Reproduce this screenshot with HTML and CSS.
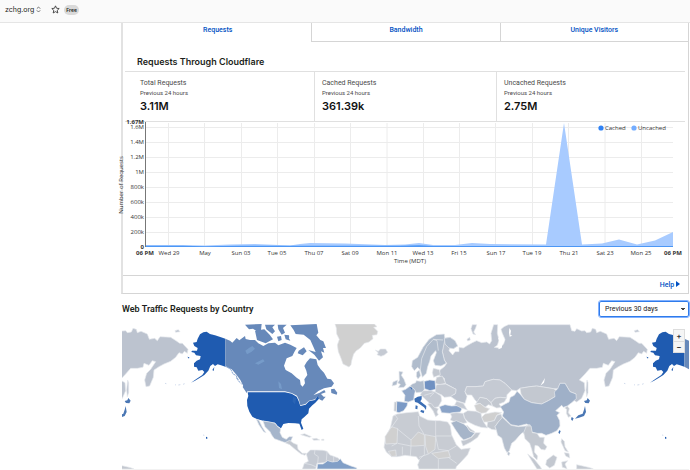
FILE: index.html
```html
<!DOCTYPE html>
<html lang="en">
<head>
<meta charset="utf-8">
<title>zchg.org analytics</title>
<link rel="stylesheet" href="styles.css">
</head>
<body>
<header class="topbar">
  <button class="site" type="button">zchg.org
    <svg class="sort" viewBox="0 0 6 8" aria-hidden="true"><path d="M1 3L3 1l2 2M1 5l2 2 2-2"/></svg>
  </button>
  <button class="star" type="button" aria-label="Star site">
    <svg viewBox="0 0 16 16" aria-hidden="true"><path d="M8 1.500l1.900 4.300 4.700.5-3.500 3.200 1 4.700L8 11.800l-4.100 2.400 1-4.700L1.400 6.300l4.700-.5z"/></svg>
  </button>
  <span class="plan">Free</span>
</header>
<main class="content">
  <section class="panel">
    <nav class="tabs">
      <a class="tab active" href="#requests">Requests</a>
      <a class="tab" href="#bandwidth">Bandwidth</a>
      <a class="tab" href="#visitors">Unique Visitors</a>
    </nav>
    <h2 class="panel-title">Requests Through Cloudflare</h2>
    <div class="stats">
      <div class="stat"><div class="name">Total Requests</div><div class="period">Previous 24 hours</div><div class="value">3.11M</div></div>
      <div class="stat"><div class="name">Cached Requests</div><div class="period">Previous 24 hours</div><div class="value">361.39k</div></div>
      <div class="stat"><div class="name">Uncached Requests</div><div class="period">Previous 24 hours</div><div class="value">2.75M</div></div>
    </div>
    <svg class="chart" viewBox="123 122 565 153" role="img" aria-label="Requests over time">
      <g class="grid">
        <path d="M146 127.500H673M146 142.500H673M146 157.500H673M146 172.500H673M146 187.500H673M146 202.500H673M146 217.500H673M146 232.500H673"/>
        <path d="M168.500 123V247M204.500 123V247M241.500 123V247M277.500 123V247M314.500 123V247M350.500 123V247M387 123V247M423.500 123V247M459.500 123V247M495.500 123V247M532.500 123V247M568.500 123V247M605 123V247M641.500 123V247"/>
      </g>
      <path class="uncached" d="M146 245L182 245 205 245.500 230 244.500 255 244 290 245.500 300 244 310 243 345 243.500 385 245 405 244.500 419 243 433 245 455 245 472 243 490 244 546 244.500 564 123 582 244.500 602 243.500 619 239.500 637 244.500 655 240.500 673 232V247H146Z"/>
      <path class="cached" d="M146 245.800H182L205 246.300 240 245.800H400L419 245.300 434 245.900H673V247H146Z"/>
      <path class="axis" d="M145.500 122V247"/>
      <g class="ylabels">
        <text class="strong" x="144" y="124">1.67M</text>
        <text x="144" y="129">1.6M</text><text x="144" y="144">1.4M</text><text x="144" y="159">1.2M</text><text x="144" y="174">1M</text>
        <text x="144" y="189">800k</text><text x="144" y="204">600k</text><text x="144" y="219">400k</text><text x="144" y="234">200k</text><text class="strong" x="144" y="249">0</text>
      </g>
      <g class="xlabels">
        <text class="strong" x="145" y="255">06 PM</text><text x="169" y="255">Wed 29</text><text x="205" y="255">May</text><text x="241" y="255">Sun 03</text><text x="277" y="255">Tue 05</text><text x="314" y="255">Thu 07</text><text x="350" y="255">Sat 09</text><text x="387" y="255">Mon 11</text><text x="423" y="255">Wed 13</text><text x="459" y="255">Fri 15</text><text x="496" y="255">Sun 17</text><text x="532" y="255">Tue 19</text><text x="569" y="255">Thu 21</text><text x="605" y="255">Sat 23</text><text x="641" y="255">Mon 25</text><text class="strong" x="673" y="255">06 PM</text>
        <text x="410" y="263">Time (MDT)</text>
        <text transform="translate(123 185) rotate(-90)">Number of Requests</text>
      </g>
      <g class="legend">
        <circle class="dot-cached" cx="601" cy="128" r="2.600"/><text x="605" y="130">Cached</text>
        <circle class="dot-uncached" cx="634" cy="128" r="2.600"/><text x="638" y="130">Uncached</text>
      </g>
    </svg>
    <footer class="panel-foot"><a class="help" href="#help">Help <svg viewBox="0 0 4 6" aria-hidden="true"><path d="M0 0l4 3-4 3z"/></svg></a></footer>
  </section>
  <div class="map-head">
    <h2>Web Traffic Requests by Country</h2>
    <select class="range" aria-label="Time range"><option>Previous 30 days</option><option>Previous 7 days</option></select>
  </div>
  <div class="map">
    <svg class="world" viewBox="21 12 1701 435" role="img" aria-label="World map of requests">
      <defs>
        <g id="east">
          <path class="russia" d="M178 55L195 52 210 62 218 78 205 86 195 82 192 92 203 105 210 95 222 95 222 82 235 84 248 76 262 68 275 62 290 68 305 66 314 72 320 62 318 40 326 14 338 14 337 40 342 60 337 76 328 82 342 84 356 72 360 58 352 40 348 28 357 20 370 14H555L560 32 570 34 575 26 590 33 600 32 605 38 617 36 622 25 632 28 635 38 646 34 665 42 671 58 687 55 695 62 703 50 735 52 751 62 762 70 770 70 787 88 785 100 776 94 770 102 760 98 750 112 735 124 715 132 700 140 685 150 683 172 672 198 661 200 657 180 663 160 675 148 690 125 680 122 670 136 655 130 652 142 635 145 615 145 600 162 583 180 598 188 600 212 590 235 575 246 565 240 573 222 555 215 540 190 525 190 520 206 505 206 480 202 455 198 435 200 405 205 395 212 380 210 360 190 345 180 325 178 300 185 295 198 270 200 245 200 240 215 246 230 240 250 215 242 195 228 210 222 213 208 195 198 180 190 178 175 160 165 165 150 178 140 185 130 178 120 172 95 175 75Z"/>
          <path class="russia" d="M262 14L275 14 272 24 266 36 272 44 264 42 258 26ZM246 58l8-6 2 8-8 3ZM748 32l10-3 5 6-13 2ZM606 180l3 8v30l-4 12-2-20Z"/>
          <path class="gap" d="M340 54L350 48 359 62 353 70 350 84 340 88 344 72ZM373 24l5 8-2 12 6 3-8 3-2-12ZM480 174l-3 14-11 9 7-12Z"/>
          <path class="kazakh" d="M240 215L245 200 270 200 295 198 300 185 325 178 345 180 360 190 380 210 366 224 365 234 345 232 330 235 318 248 305 236 285 232 278 248 270 240 260 225 246 225Z"/>
          <path class="gray" d="M405 205L435 200 455 198 480 202 505 206 520 214 510 230 490 242 470 252 440 248 418 238 408 222Z"/>
          <path class="gray" d="M318 248L330 235 345 232 365 234 358 246 342 252 350 262 335 264 322 258ZM272 252L285 232 305 236 318 248 322 258 310 254 300 262 285 250Z"/>
          <path class="none" d="M268 256L285 250 300 262 314 266 303 278 288 280 274 272Z"/>
          <path class="china" d="M346 260L360 252 372 246 376 232 388 226 396 214 405 222 418 238 440 248 470 252 490 242 510 230 508 216 518 206 525 190 540 190 555 215 573 222 574 236 560 248 547 258 535 262 530 256 512 272 524 278 516 286 524 302 525 318 516 332 500 340 483 346 470 340 455 340 440 336 437 318 425 312 400 318 378 314 364 300 352 288 356 276Z"/>
          <path class="gray" d="M547 258l6 8-3 12 8 10-8 4-6-12 1-12-6-4Z"/>
          <path class="none" d="M300 282L330 276 350 278 335 286 328 302 312 306 296 306 290 292Z"/>
          <path class="gray" d="M308 306L328 302 336 286 348 282 352 294 340 306 330 320 334 330 320 328 306 320Z"/>
          <path class="india" d="M334 330L330 320 340 306 352 292 365 304 378 316 400 320 422 318 435 314 432 332 424 342 412 338 404 346 390 362 380 370 373 392 366 398 358 384 350 354 338 346ZM370 394l5 6-3 7-5-4Z"/>
          <path class="gray" d="M424 318L438 318 442 338 456 340 464 352 478 352 476 370 486 380 480 390 468 388 460 378 450 376 448 396 458 408 456 420 446 410 440 388 434 370 420 356 416 338Z"/>
          <path class="east-asia" d="M428 402L448 418 466 440 470 447H456L440 422ZM485 420L505 405 516 412 508 436 494 444 482 434ZM530 356l8 8 2 16 10 16-10-4-12-26ZM538 398l14 2 2 14-12-6ZM530 426l18-4-8 10 6 14-14-4ZM575 434l18 4 22 5 10 4h-50Z"/>
          <path class="kazakh" d="M235 280L248 272 272 274 288 280 290 292 296 306 308 324 288 322 270 316 250 306 238 294ZM196 280L215 278 234 280 240 296 246 308 236 310 205 304 196 300 200 290Z"/>
          <path class="saudi" d="M198 308L214 302 236 312 246 320 256 334 270 338 258 352 236 360 226 350 212 330Z"/>
          <path class="gray" d="M228 362L242 360 260 352 272 338 286 338 278 352 258 366 234 378ZM246 316l10 10 12 8 2 4-16-5-9-15Z"/>
          <path class="turkey" d="M163 260L180 254 200 258 225 256 230 268 226 276 202 278 194 280 170 278Z"/>
          <path class="kazakh" d="M215 244l20 6 12 20-18-6-20-10Z"/>
          <path class="gray" d="M155 172L172 168 182 190 165 194 150 190ZM145 145l18 4 3 15-20 8-4-14Z"/>
          <path class="kazakh" d="M154 194L182 192 213 208 212 220 196 230 178 232 170 225 150 216ZM112 212L138 212 152 216 168 228 170 242 160 260 145 264 134 250 118 235 106 225Z"/>
          <path class="gray" d="M148 262l12 4-4 10 4 8-8 6-8-18-16-20 10-2ZM100 112l5 10 12-8-8-8Z"/>
          <path class="nordic" d="M82 122L98 112 114 82 132 58 154 44 178 42 180 58 172 95 178 120 184 130 168 138 150 136 145 122 154 98 152 92 138 108 134 124 128 140 124 160 112 172 106 150 98 142 88 152 80 140ZM95 156l8-5 4 16-8 10-5-8Z"/>
          <path class="nordic" d="M178 55L195 52 210 62 218 78 205 86 192 84 180 72Z"/>
          <path class="border" d="M106 150L110 116 125 80 145 58 156 62 160 92M145 58L174 60M148 218L135 230M170 225L155 220M118 226L145 218"/>
          <path class="france" d="M50 212L62 208 75 198 92 210 88 224 86 240 70 246 58 244 60 226Z"/>
          <path class="spain" d="M35 244L68 248 66 258 56 272 42 278 34 276Z"/>
          <path class="gray" d="M28 246h7l-1 28-7-1Z"/>
          <path class="nordic" d="M75 198L82 192 92 188 94 182 106 184 116 182 118 208 112 216 94 218 88 208ZM24 186l14-6-3 14-14 4ZM42 154l12 2-5 10 8 12 6 16-6 8-17 1 6-10-8-4 5-8Z"/>
          <path class="poland" d="M118 184L134 180 150 182 152 208 135 212 119 206Z"/>
          <path class="italy" d="M88 236L98 230 110 228 110 238 106 244 124 258 123 270 117 262 98 248 90 246ZM108 270l10 2-2 8-10-5ZM92 256l6 2-1 10-6-2ZM75 200l7 4-2 5Z"/>
          <path class="africa" d="M24 288L36 282 65 278 100 275 104 288 128 300 150 302 165 302 188 306 196 318 200 345 214 374 228 388 256 384 248 404 228 426 214 440 212 447H102L98 434 103 422 94 410 76 408 60 406 38 410 20 410 4 396-3 382 2 350 16 324Z"/>
          <path class="none" d="M0 350L20 320 38 326 36 370 2 372ZM78 360L100 336 118 344 118 376 90 378 78 378ZM120 344L152 350 150 388 130 402 122 380ZM140 400L190 392 196 412 160 416ZM10 394l22-4 2 18-14 2Z"/>
          <path class="border" d="M30 284L38 296 18 324M100 288L102 318 118 344M36 326L78 360M152 302V348H200M152 348L160 388 190 392 214 378M118 376V404L102 420M38 370L78 378 76 408M52 380V404M160 418V447M190 412L215 430M20 378L36 370M130 402L102 412"/>
          <path class="japan" d="M608 234l7 8-4 8-10-1-4-6 8-2ZM600 258l3 18-6 12-15 5-12 3 10-10 13-5 4-12ZM560 291l6 4-4 8-4-5ZM524 330l3 4-4 9-3-6Z"/>
        </g>
        <g id="alaska">
          <path class="usa" d="M265 37L275 35 285 42 300 46 318 52 331 56V140L318 136 308 133 300 138 294 132 286 138 280 152 268 165 255 173 240 182 228 188 245 176 262 165 268 156 262 150 250 152 245 142 237 140 237 130 245 122 255 118 257 108 243 106 238 98 229 96 231 92 246 92 248 84 238 78 234 68 245 66 248 56 255 43ZM292 150l6-9-2 12ZM217 110l6 2-1 4ZM273 350l4 2v4h-4Z"/>
          <path class="islands" d="M150 190l4 1M190 195l6-1M204 193l5-2M180 194l3 1M264 345l4 1"/>
        </g>
      </defs>
      <use href="#east" x="-568"/>
      <use href="#east" x="810"/>
      <use href="#alaska"/>
      <path class="canada" d="M331 56L345 62 352 68 365 54 373 61 390 48 392 57 405 60 420 60 430 70 445 78 460 70 480 68 490 76 510 68 526 74 545 84 538 96 532 108 515 115 507 137 512 150 530 160 545 173 555 180 557 194 563 200 570 190 568 178 577 165 574 152 568 138 575 126 585 115 604 118 608 135 617 148 627 158 637 176 648 178 657 190 650 200 627 205 610 213 595 226 614 218 628 210 632 217 618 222 626 230 632 230 622 242 613 238 610 228 600 238 582 242 571 252 556 256 552 240 546 227 530 219 510 214H398L385 198 376 180 365 165 350 148 331 140Z"/>
      <path class="canada" d="M390 14L440 12 438 30 426 34 414 26 402 28ZM420 32L448 28 464 44 474 58 452 70 426 60ZM450 14H480L472 22 480 34 472 42 454 28ZM488 14H515L504 24 510 38 500 44 490 28ZM526 16L605 12 610 38 604 46 616 60 625 64 633 84 624 84 628 98 618 94 624 112 612 122 598 104 580 90 602 96 594 78 586 60 566 44 542 42 536 30ZM486 50l12-2 2 12-10 4ZM508 44l14 2 4 16-14-4ZM551 92l16-10 8 12-12 12-15-6ZM648 208l10-2 9 12-2 6-16-5ZM386 194l12 18-3 7-12-18ZM365 170l5 14-6-9Z"/>
      <path class="gap" d="M570 58L584 72 582 86 570 78 562 64ZM525 38L538 58 532 68 522 56Z"/>
      <path class="lake" d="M391 92l12-9 9-5 8 8-10 9-14 8ZM420 130l24-12 5 6-19 10ZM490 184l8 8 3 16-9-4Z"/>
      <path class="usa" d="M398 217H510L530 221 545 230 551 243 556 258 572 254 582 244 600 240 610 226 612 236 601 248 592 256 582 266 580 280 568 291 560 298 558 308 565 326 560 330 553 311 540 310 520 309 505 312 498 325 488 318 480 308 465 306 445 302 425 297 412 290 403 275 397 258 396 240 400 228Z"/>
      <path class="greatlake" d="M534 230l10 5-4 18-7-8Z"/>
      <path class="panhandle" d="M331 137L348 149 354 162 363 166 373 186 380 192"/>
      <g transform="translate(420 0)">
        <path class="none" d="M240 12H358L366 20 356 22 368 34 366 44 352 46 354 56 342 66 328 70 316 84 304 92 296 102 290 122 288 134 282 141 264 132 258 115 250 95 247 75 253 58 245 42 244 24Z"/>
        <path class="kazakh" d="M361 90L370 94 376 87 392 87 398 97 388 105 378 109 366 104 370 99Z"/>
        <path class="mexico" d="M24 303L45 306 60 310 68 320 77 326 75 338 82 352 94 358 102 350 113 350 108 362 98 370 85 366 58 356 50 345 45 335 30 320ZM4 298L12 301 22 322 33 338 26 335 12 315Z"/>
        <path class="gray" d="M90 368L104 361 116 370 127 374 129 388 142 400 154 400 150 406 138 402 120 388 104 374ZM137 344l12-3 20 9-6 2ZM172 356l12-1 10 5-18 1ZM200 358h7v3h-7Z"/>
        <path class="kazakh" d="M154 402L166 390 182 390 204 391 216 394 225 405 250 414 256 424 240 428 218 424 206 428 186 430 182 447H142L148 430 160 424Z"/>
        <path class="brazil" d="M186 447L188 432 204 432 218 422 232 426 248 424 256 416 264 428 288 438 304 443 306 447Z"/>
        <path class="border" d="M180 390L178 402 190 410 188 430M148 430L168 434 182 440M216 396L214 422M236 410V426"/>
      </g>
      <use href="#alaska" x="1377"/>
      <path class="canada" d="M1708 56L1722 62V148L1708 140Z"/>
    </svg>
    <div class="zoom">
      <button type="button" aria-label="Zoom in">+</button>
      <button type="button" aria-label="Zoom out">−</button>
    </div>
  </div>
</main>
</body>
</html>
```
FILE: styles.css
```css
* { box-sizing: border-box; }
body { margin: 0; background: #fff; color: #1d1f20; font: 7px/8px Inter, "Liberation Sans", sans-serif; }
button { padding: 0; border: 0; background: none; font: inherit; color: inherit; }
a { color: #0051c3; text-decoration: none; }
h2 { margin: 0; font-size: 9px; line-height: 12px; font-weight: 600; }

.topbar { display: flex; align-items: center; height: 23px; padding: 0 5px 3px; background: #fafafa; border-bottom: 1px solid #e5e5e5; }
.site { display: flex; align-items: center; gap: 2px; }
.sort { width: 5px; height: 7px; fill: none; stroke: #555; }
.star { width: 9px; height: 9px; margin-left: 10px; }
.star svg { display: block; fill: none; stroke: #333; stroke-width: 1.5; }
.plan { margin-left: 4px; padding: 1px 2px; border-radius: 6px; background: #d9d9d9; font-size: 5px; font-weight: 600; }

.content { padding: 0 1px 0 121px; }
.panel { border: 1px solid #d5d5d5; border-left: 2px solid #e2e2e2; border-top: 0; }
.tabs { display: grid; grid-template-columns: repeat(3, 1fr); font-family: Roboto, sans-serif; }
.tab { height: 19px; padding-top: 3px; text-align: center; font-weight: 500; border-left: 1px solid #d5d5d5; border-bottom: 1px solid #d5d5d5; }
.tab.active { border-color: transparent; }
.panel-title { padding: 14px 14px 3px; }
.stats { display: grid; grid-template-columns: 189fr 182fr 189fr; margin: 0 3px 0 2px; border-top: 1px solid #e0e0e0; border-bottom: 1px solid #e0e0e0; font-family: Roboto, sans-serif; }
.stat { height: 49px; padding: 7px 7px 0; border-left: 1px solid #e0e0e0; color: #4a4a4a; }
.stat:first-child { padding-left: 15px; border-left: 0; }
.period { margin-top: 2px; font-size: 6px; }
.value { margin-top: 3px; color: #111; font: 600 11px/12px Inter, sans-serif; }

.chart { display: block; width: 100%; overflow: visible; font: 6px "Open Sans", sans-serif; fill: #333; }
.grid { fill: none; stroke: #ececec; stroke-width: 1; }
.uncached { fill: #a8cbff; }
.cached { fill: #4c97f5; }
.axis { stroke: #777; stroke-width: 1; }
.ylabels { text-anchor: end; }
.xlabels { text-anchor: middle; }
.strong { font-weight: 700; }
.dot-cached { fill: #2f82f5; }
.dot-uncached { fill: #74adff; }
.panel-foot { height: 18px; padding: 5px 8px; border-top: 1px solid #d5d5d5; text-align: right; font-family: Roboto, sans-serif; }
.help { font-weight: 500; }
.help svg { width: 4px; height: 6px; fill: #0051c3; }

.map-head { display: flex; align-items: center; justify-content: space-between; height: 30px; padding-left: 1px; }
.map-head h2 { font-family: Roboto, sans-serif; }
.range { appearance: none; width: 90px; height: 16px; padding: 0 5px; border: 1px solid #2f7bea; border-radius: 2px; outline: 1px solid #82b1ff; color: #222; font: 7px Roboto, sans-serif; background: linear-gradient(#444, #444) 81px 6px / 4px 1px no-repeat, linear-gradient(#444, #444) 82px 7px / 2px 1px no-repeat, #fff; }
.map { position: relative; margin-left: 1px; border-bottom: 1px solid #f2f2f2; }
.world { display: block; width: 100%; stroke: #e5e8ed; stroke-width: 2; stroke-linejoin: round; }
.russia { fill: #bcc3cf; }
.kazakh { fill: #c5cad3; }
.africa { fill: #c8ccd3; }
.gray, .east-asia { fill: #c3c8d0; }
.none { fill: #d0d0d0; }
.china { fill: #9fb0c8; }
.india { fill: #b5bfcd; }
.saudi { fill: #a6b5c9; }
.turkey { fill: #8ba4c8; }
.nordic { fill: #b0bccc; }
.france { fill: #91a8c9; }
.spain { fill: #7b9ac6; }
.poland { fill: #7091c2; }
.italy { fill: #3b6eb5; stroke: none; }
.japan { fill: #4a77b4; stroke: none; }
.usa { fill: #1f5bb0; stroke: none; }
.canada { fill: #6789ba; stroke: none; }
.mexico { fill: #a5b5cb; }
.brazil { fill: #819fc7; }
.lake { fill: #769bc9; stroke: none; }
.greatlake { fill: #2a64b4; stroke: none; }
.gap { fill: #fff; stroke: none; }
.border { fill: none; }
.islands { fill: none; stroke: #b9c9e2; }
.panhandle { fill: none; stroke: #8ba8d3; stroke-width: 3; stroke-dasharray: 7 2; }

.zoom { position: absolute; top: 5px; right: 4px; display: grid; width: 12px; border: 1px solid #ddd; background: #f5f5f5; }
.zoom button { height: 11px; color: #333; font-size: 8px; line-height: 10px; font-weight: 600; }
.zoom button + button { border-top: 1px solid #ddd; }
```
